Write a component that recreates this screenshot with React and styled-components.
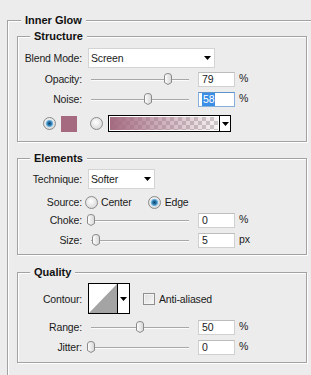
import React from 'react';
import styled, { createGlobalStyle } from 'styled-components';

const Global = createGlobalStyle`
  html, body { margin: 0; padding: 0; background: #ececec; overflow: hidden; }
  body { font-family: "Liberation Sans", Arial, sans-serif; font-size: 10.5px; letter-spacing: -0.15px; color: #1b1b1b; }
`;

const Page = styled.div`
  width: 311px;
  height: 375px;
  overflow: hidden;
  box-sizing: border-box;
  padding: 20px 0 0 7px;
`;

const Group = styled.section`
  position: relative;
  box-sizing: border-box;
  width: ${p => p.$w}px;
  margin: ${p => p.$mt || 0}px 0 0 ${p => p.$ml || 0}px;
  padding: ${p => p.$pt || 0}px 0 ${p => p.$pb || 0}px 0;
  border: 1px solid #a2a2a2;
  box-shadow: 1px 1px 0 #ffffff, inset 1px 1px 0 #ffffff;
`;

const Legend = styled.span`
  position: absolute;
  top: -7px;
  left: ${p => p.$left}px;
  padding: 0 4px;
  background: #ececec;
  font: bold 11px/13px "Liberation Sans", Arial, sans-serif;
  letter-spacing: 0;
  color: #111;
  white-space: nowrap;
`;

const Row = styled.div`
  display: flex;
  align-items: center;
  height: ${p => p.$h || 20}px;
  margin-top: ${p => p.$mt || 0}px;
  padding-left: ${p => p.$pl || 0}px;
`;

const Label = styled.span`
  flex: none;
  width: 64px;
  text-align: right;
  margin-right: ${p => (p.$gap ?? 6)}px;
  white-space: nowrap;
`;

const Select = styled.div`
  flex: none;
  display: flex;
  align-items: center;
  justify-content: space-between;
  box-sizing: border-box;
  width: ${p => p.$w}px;
  height: 20px;
  padding: 0 3px 0 2px;
  background: #fff;
  border: 1px solid #d4d4d4;
`;

const SliderBox = styled.div`
  position: relative;
  flex: none;
  width: 104px;
  height: 20px;
  margin-right: 6px;
`;

const Track = styled.div`
  position: absolute;
  left: 3px;
  right: 3px;
  top: 10px;
  height: 1px;
  background: #a8a8a8;
  box-shadow: 0 1px 0 #fbfbfb;
`;

const ThumbWrap = styled.div`
  position: absolute;
  top: 4px;
  left: ${p => 3 + p.$v * 0.975 - 4}px;
  width: 8px;
  height: 12px;
  line-height: 0;
`;

const Field = styled.div`
  flex: none;
  box-sizing: border-box;
  width: 37px;
  height: 15px;
  margin-right: 4px;
  padding-left: 3px;
  line-height: 13px;
  background: #fff;
  border: 1px solid ${p => (p.$focus ? '#86b1dc' : '#d0d0d0')};
  border-top-color: ${p => (p.$focus ? '#5d93c9' : '#bdbdbd')};
`;

const Selected = styled.span`
  display: inline-block;
  background: #3a8ee6;
  color: #fff;
  padding: 0 1px;
`;

const Unit = styled.span`
  flex: none;
  margin-top: -2px;
`;

const Swatch = styled.div`
  flex: none;
  width: 16px;
  height: 16px;
  margin: 0 ${p => p.$mr}px 0 ${p => p.$ml}px;
  background: #a56a80;
`;

const GradientBox = styled.div`
  flex: none;
  display: flex;
  box-sizing: border-box;
  width: 123px;
  height: 17px;
  margin-left: 5px;
  background: #fff;
  border: 1px solid #000;
`;

const GradientFill = styled.div`
  flex: 1;
  margin: 1px;
  background:
    linear-gradient(to right, #a46a80 0%, rgba(164, 106, 128, 0.6) 40%, rgba(164, 106, 128, 0.08) 100%),
    repeating-conic-gradient(#cfcfcf 0 25%, #ffffff 0 50%) 0 0 / 8px 8px;
`;

const ArrowCell = styled.div`
  flex: none;
  width: ${p => p.$w}px;
  display: flex;
  align-items: center;
  justify-content: center;
  border-left: 1px solid #000;
  box-sizing: border-box;
`;

const RadioText = styled.span`
  margin: 0 ${p => p.$mr || 0}px 0 ${p => p.$ml || 0}px;
`;

const ContourBox = styled.div`
  flex: none;
  display: flex;
  box-sizing: border-box;
  width: 42px;
  height: 31px;
  background: #fff;
  border: 1px solid #000;
`;

const ContourPreview = styled.div`
  flex: 1;
  line-height: 0;
`;

const Check = styled.div`
  flex: none;
  box-sizing: border-box;
  width: 12px;
  height: 12px;
  margin: 0 4px 0 13px;
  border: 1px solid #8e8f8f;
  background: linear-gradient(135deg, #dcdcdc, #f8f8f8);
  box-shadow: inset 0 0 0 1px #f4f4f4;
`;

const Arrow = () => (
  <svg width="7" height="4" viewBox="0 0 7 4">
    <polygon points="0,0 7,0 3.5,4" fill="#000" />
  </svg>
);

const Radio = ({ checked }) => (
  <svg width="13" height="13" viewBox="0 0 13 13" style={{ flex: 'none' }}>
    <defs>
      <radialGradient id="rbg" cx="45%" cy="40%" r="70%">
        <stop offset="0" stopColor="#ffffff" />
        <stop offset="1" stopColor="#d2d2d2" />
      </radialGradient>
      <radialGradient id="rdot" cx="50%" cy="50%" r="50%">
        <stop offset="0" stopColor="#123f66" />
        <stop offset="0.55" stopColor="#2f7fb6" />
        <stop offset="1" stopColor="#9fd3ef" />
      </radialGradient>
    </defs>
    <circle cx="6.5" cy="6.5" r="6" fill="url(#rbg)" stroke="#8a8a8a" />
    {checked && <circle cx="6.5" cy="6.5" r="3.8" fill="url(#rdot)" />}
  </svg>
);

const Thumb = () => (
  <svg width="8" height="12" viewBox="0 0 8 12">
    <defs>
      <linearGradient id="tg" x1="0" x2="1" y1="0" y2="0">
        <stop offset="0" stopColor="#ffffff" />
        <stop offset="1" stopColor="#d6d6d6" />
      </linearGradient>
    </defs>
    <path d="M0.5 3 Q0.5 0.5 4 0.5 Q7.5 0.5 7.5 3 V9.5 L4 11.5 L0.5 9.5 Z" fill="url(#tg)" stroke="#8a8a8a" />
  </svg>
);

const SliderRow = ({ label, value, unit = '%', focus, mt }) => (
  <Row $mt={mt}>
    <Label>{label}</Label>
    <SliderBox>
      <Track />
      <ThumbWrap $v={value}>
        <Thumb />
      </ThumbWrap>
    </SliderBox>
    <Field $focus={focus}>{focus ? <Selected>{value}</Selected> : value}</Field>
    <Unit>{unit}</Unit>
  </Row>
);

export default function App() {
  return (
    <>
      <Global />
      <Page>
        <Group $w={330} $pb={30}>
          <Legend $left={13}>Inner Glow</Legend>

          <Group $w={290} $ml={9} $mt={15} $pt={11} $pb={9}>
            <Legend $left={12}>Structure</Legend>
            <Row>
              <Label>Blend Mode:</Label>
              <Select $w={127}>
                <span>Screen</span>
                <Arrow />
              </Select>
            </Row>
            <SliderRow label="Opacity:" value={79} mt={1} />
            <SliderRow label="Noise:" value={58} focus />
            <Row $h={17} $mt={6} $pl={25}>
              <Radio checked />
              <Swatch $ml={5} $mr={13} />
              <Radio />
              <GradientBox>
                <GradientFill />
                <ArrowCell $w={11}><Arrow /></ArrowCell>
              </GradientBox>
            </Row>
          </Group>

          <Group $w={290} $ml={9} $mt={16} $pt={10} $pb={4}>
            <Legend $left={12}>Elements</Legend>
            <Row>
              <Label>Technique:</Label>
              <Select $w={67}>
                <span>Softer</span>
                <Arrow />
              </Select>
            </Row>
            <Row $h={16} $mt={5}>
              <Label $gap={3}>Source:</Label>
              <Radio />
              <RadioText $ml={3} $mr={16}>Center</RadioText>
              <Radio checked />
              <RadioText $ml={4}>Edge</RadioText>
            </Row>
            <SliderRow label="Choke:" value={0} />
            <SliderRow label="Size:" value={5} unit="px" />
          </Group>

          <Group $w={290} $ml={9} $mt={17} $pt={10} $pb={5}>
            <Legend $left={12}>Quality</Legend>
            <Row $h={31}>
              <Label>Contour:</Label>
              <ContourBox>
                <ContourPreview>
                  <svg width="28" height="29" viewBox="0 0 28 29">
                    <polygon points="0,29 28,0 28,29" fill="#a4a4a4" />
                  </svg>
                </ContourPreview>
                <ArrowCell $w={12}><Arrow /></ArrowCell>
              </ContourBox>
              <Check />
              <span>Anti-aliased</span>
            </Row>
            <SliderRow label="Range:" value={50} mt={3} />
            <SliderRow label="Jitter:" value={0} />
          </Group>
        </Group>
      </Page>
    </>
  );
}
